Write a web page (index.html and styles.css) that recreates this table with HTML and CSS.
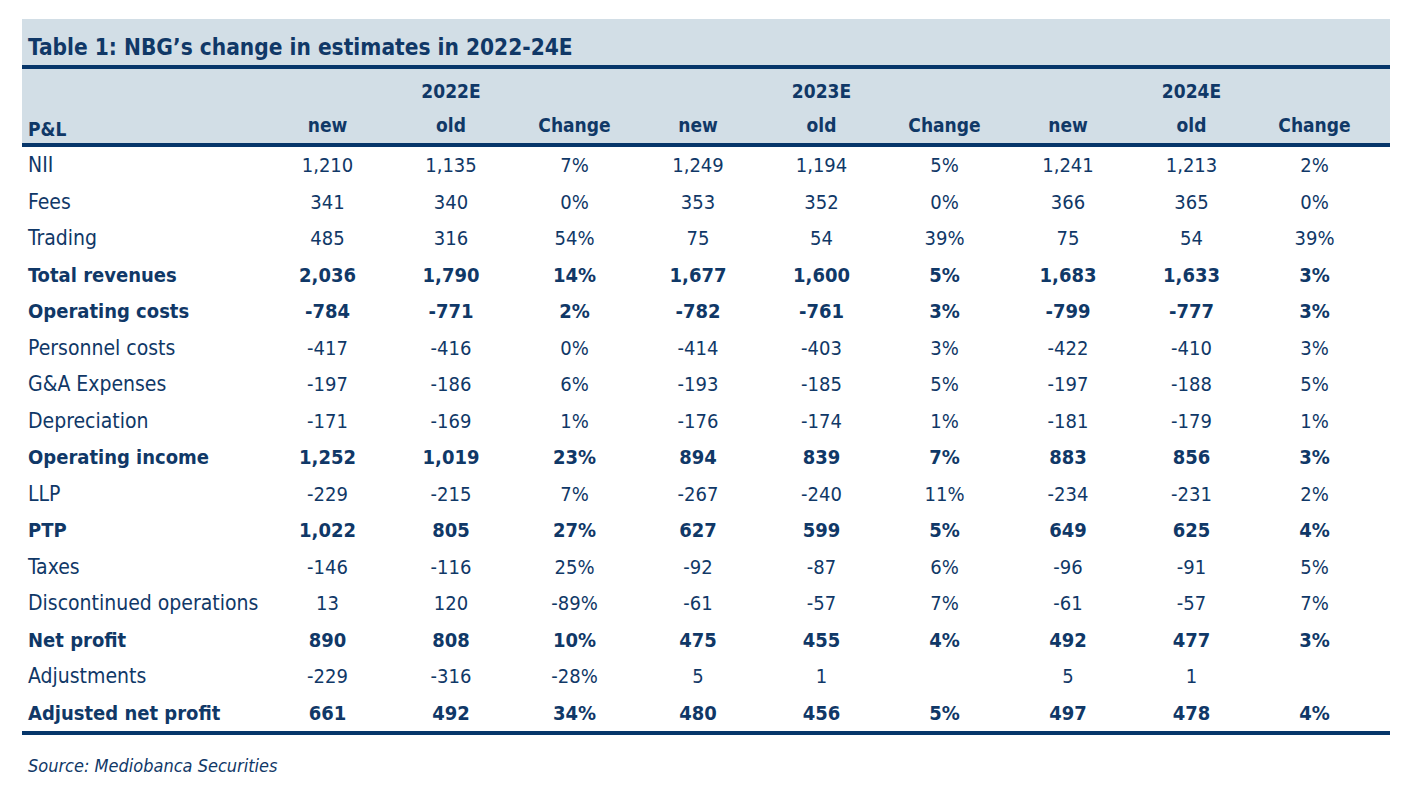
FILE: index.html
```html
<!DOCTYPE html>
<html lang="en">
<head>
<meta charset="utf-8">
<title>Table 1: NBG's change in estimates in 2022-24E</title>
<link rel="stylesheet" href="styles.css">
</head>
<body>
<div class="wrap">
  <div class="title">Table 1: NBG’s change in estimates in 2022-24E</div>
  <table class="est">
    <colgroup>
      <col class="c-label">
      <col class="c1"><col class="c2"><col class="c3">
      <col class="c4"><col class="c5"><col class="c6">
      <col class="c7"><col class="c8"><col class="c9">
    </colgroup>
    <thead>
      <tr class="yr">
        <th></th><th></th><th>2022E</th><th></th><th></th><th>2023E</th><th></th><th></th><th>2024E</th><th></th>
      </tr>
      <tr class="sub">
        <th class="lbl">P&amp;L</th><th>new</th><th>old</th><th>Change</th><th>new</th><th>old</th><th>Change</th><th>new</th><th>old</th><th>Change</th>
      </tr>
    </thead>
    <tbody>
      <tr><td>NII</td><td>1,210</td><td>1,135</td><td>7%</td><td>1,249</td><td>1,194</td><td>5%</td><td>1,241</td><td>1,213</td><td>2%</td></tr>
      <tr><td>Fees</td><td>341</td><td>340</td><td>0%</td><td>353</td><td>352</td><td>0%</td><td>366</td><td>365</td><td>0%</td></tr>
      <tr><td>Trading</td><td>485</td><td>316</td><td>54%</td><td>75</td><td>54</td><td>39%</td><td>75</td><td>54</td><td>39%</td></tr>
      <tr class="b"><td>Total revenues</td><td>2,036</td><td>1,790</td><td>14%</td><td>1,677</td><td>1,600</td><td>5%</td><td>1,683</td><td>1,633</td><td>3%</td></tr>
      <tr class="b"><td>Operating costs</td><td>-784</td><td>-771</td><td>2%</td><td>-782</td><td>-761</td><td>3%</td><td>-799</td><td>-777</td><td>3%</td></tr>
      <tr><td>Personnel costs</td><td>-417</td><td>-416</td><td>0%</td><td>-414</td><td>-403</td><td>3%</td><td>-422</td><td>-410</td><td>3%</td></tr>
      <tr><td>G&amp;A Expenses</td><td>-197</td><td>-186</td><td>6%</td><td>-193</td><td>-185</td><td>5%</td><td>-197</td><td>-188</td><td>5%</td></tr>
      <tr><td>Depreciation</td><td>-171</td><td>-169</td><td>1%</td><td>-176</td><td>-174</td><td>1%</td><td>-181</td><td>-179</td><td>1%</td></tr>
      <tr class="b"><td>Operating income</td><td>1,252</td><td>1,019</td><td>23%</td><td>894</td><td>839</td><td>7%</td><td>883</td><td>856</td><td>3%</td></tr>
      <tr><td>LLP</td><td>-229</td><td>-215</td><td>7%</td><td>-267</td><td>-240</td><td>11%</td><td>-234</td><td>-231</td><td>2%</td></tr>
      <tr class="b"><td>PTP</td><td>1,022</td><td>805</td><td>27%</td><td>627</td><td>599</td><td>5%</td><td>649</td><td>625</td><td>4%</td></tr>
      <tr><td>Taxes</td><td>-146</td><td>-116</td><td>25%</td><td>-92</td><td>-87</td><td>6%</td><td>-96</td><td>-91</td><td>5%</td></tr>
      <tr><td>Discontinued operations</td><td>13</td><td>120</td><td>-89%</td><td>-61</td><td>-57</td><td>7%</td><td>-61</td><td>-57</td><td>7%</td></tr>
      <tr class="b"><td>Net profit</td><td>890</td><td>808</td><td>10%</td><td>475</td><td>455</td><td>4%</td><td>492</td><td>477</td><td>3%</td></tr>
      <tr><td>Adjustments</td><td>-229</td><td>-316</td><td>-28%</td><td>5</td><td>1</td><td></td><td>5</td><td>1</td><td></td></tr>
      <tr class="b"><td>Adjusted net profit</td><td>661</td><td>492</td><td>34%</td><td>480</td><td>456</td><td>5%</td><td>497</td><td>478</td><td>4%</td></tr>
    </tbody>
  </table>
  <div class="source">Source: Mediobanca Securities</div>
</div>
</body>
</html>
```
FILE: styles.css
```css
html, body { margin: 0; padding: 0; background: #ffffff; }
body {
  font-family: "DejaVu Sans Condensed", "DejaVu Sans", sans-serif;
  color: #103867;
}
.wrap {
  width: 1368px;
  margin: 19px 0 0 22px;
}
.title {
  background: #d2dee6;
  height: 46px;
  box-sizing: border-box;
  padding: 14px 0 0 6px;
  font-size: 22.5px;
  font-weight: bold;
  line-height: 28px;
  white-space: nowrap;
}
.est {
  width: 1368px;
  border-collapse: separate;
  border-spacing: 0;
  table-layout: fixed;
  border-top: 4px solid #06366a;
  border-bottom: 4px solid #06366a;
}
.c-label { width: 244px; }
.c1 { width: 123px; }
.c2 { width: 124px; }
.c3 { width: 123px; }
.c4 { width: 124px; }
.c5 { width: 123px; }
.c6 { width: 123px; }
.c7 { width: 124px; }
.c8 { width: 123px; }
.c9 { width: 137px; }
.est thead { background: #d2dee6; }
.est th {
  box-sizing: content-box;
  font-weight: bold;
  font-size: 19px;
  line-height: 24px;
  text-align: center;
  padding: 0;
  vertical-align: top;
  white-space: nowrap;
}
.est tr.yr th { height: 27px; padding-top: 10px; }
.est tr.sub th { height: 30px; padding-top: 7px; border-bottom: 4px solid #06366a; }
.est tr.sub th.lbl { text-align: left; padding-left: 6px; padding-top: 11px; height: 26px; }
.est th:last-child, .est td:last-child { padding-right: 14px; }
.est td {
  box-sizing: content-box;
  height: 36.5px;
  font-size: 20px;
  line-height: 24px;
  text-align: center;
  padding: 0;
  vertical-align: middle;
  white-space: nowrap;
}
.est td:first-child { text-align: left; padding-left: 6px; font-size: 21px; }
.est tr.b td { font-weight: bold; }
.est tr.b td:first-child { font-size: 20px; }
.source {
  margin-top: 19px;
  padding-left: 6px;
  font-size: 18px;
  line-height: 24px;
  font-style: italic;
}
```
